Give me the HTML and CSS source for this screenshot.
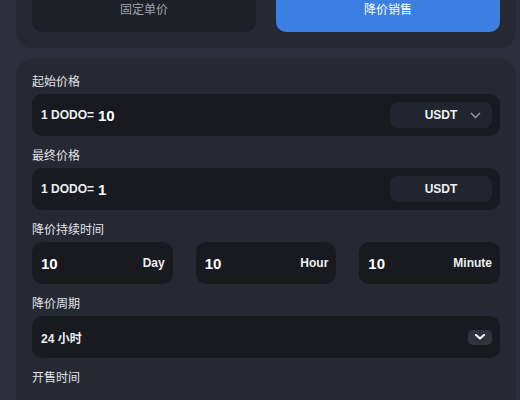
FILE: index.html
```html
<!DOCTYPE html>
<html lang="zh">
<head>
<meta charset="utf-8">
<title>降价销售</title>
<link rel="stylesheet" href="styles.css">
</head>
<body>
<div class="page">
  <section class="card tabs-card">
    <div class="tabs">
      <button class="tab">固定单价</button>
      <button class="tab active">降价销售</button>
    </div>
  </section>
  <section class="card form-card">
    <div class="field">
      <div class="label">起始价格</div>
      <div class="input">
        <span class="prefix">1 DODO=</span><span class="value">10</span>
        <span class="token">USDT
          <svg class="chev" width="11" height="7" viewBox="0 0 11 7"><path d="M1 1l4.5 4.5L10 1" fill="none" stroke="#9a9ca6" stroke-width="1.3"/></svg>
        </span>
      </div>
    </div>
    <div class="field">
      <div class="label">最终价格</div>
      <div class="input">
        <span class="prefix">1 DODO=</span><span class="value">1</span>
        <span class="token short">USDT</span>
      </div>
    </div>
    <div class="field">
      <div class="label">降价持续时间</div>
      <div class="time-row">
        <div class="input time"><span class="value">10</span><span class="unit">Day</span></div>
        <div class="input time"><span class="value">10</span><span class="unit">Hour</span></div>
        <div class="input time"><span class="value">10</span><span class="unit">Minute</span></div>
      </div>
    </div>
    <div class="field">
      <div class="label">降价周期</div>
      <div class="input">
        <span class="prefix">24 小时</span>
        <span class="sel-btn"><svg width="10" height="6" viewBox="0 0 10 6"><path d="M1 1l4 3.5L9 1" fill="none" stroke="#ffffff" stroke-width="2" stroke-linecap="round" stroke-linejoin="round"/></svg></span>
      </div>
    </div>
    <div class="field">
      <div class="label">开售时间</div>
    </div>
  </section>
</div>
</body>
</html>
```
FILE: styles.css
```css
* { box-sizing: border-box; }
html, body { margin: 0; height: 100%; overflow: hidden; }
body {
  background: #2c2f3a;
  font-family: "Liberation Sans", Arial, "Noto Sans CJK SC", sans-serif;
  color: #e6e7ec;
}
.page {
  height: 100vh;
  padding: 0 4px 0 16px;
  display: flex;
  flex-direction: column;
  gap: 11px;
}
.card {
  background: #262932;
  border-radius: 16px;
}
.tabs-card {
  margin-top: -16px;
  padding: 0 16px 16px;
}
.tabs {
  display: grid;
  grid-template-columns: 1fr 1fr;
  gap: 20px;
}
.tab {
  height: 48px;
  border: none;
  border-radius: 10px;
  background: #1e2027;
  color: #a0a2aa;
  font-family: "Noto Sans CJK SC", sans-serif;
  font-size: 12px;
  padding: 0;
}
.tab.active {
  background: #3a7fe1;
  color: #ffffff;
}
.form-card {
  flex: 1;
  border-radius: 16px 16px 0 0;
  padding: 12px 16px 0;
  display: flex;
  flex-direction: column;
  gap: 9px;
  overflow: hidden;
}
.field {
  display: flex;
  flex-direction: column;
  gap: 3px;
}
.label {
  font-family: "Noto Sans CJK SC", sans-serif;
  font-size: 12px;
  line-height: 20px;
  color: #e2e3e8;
}
.input {
  height: 42px;
  background: #181a20;
  border-radius: 10px;
  display: flex;
  align-items: center;
  padding: 0 8px 0 9px;
}
.prefix {
  font-family: "Liberation Sans", Arial, "Noto Sans CJK SC", sans-serif;
  font-size: 12px;
  font-weight: bold;
  color: #eceef2;
  margin-right: 4px;
}
.value {
  font-size: 15px;
  font-weight: bold;
  color: #ffffff;
}
.token {
  margin-left: auto;
  width: 102px;
  height: 26px;
  border-radius: 8px;
  background: #22252d;
  display: flex;
  align-items: center;
  justify-content: center;
  position: relative;
  font-size: 12px;
  font-weight: bold;
  color: #f0f1f4;
}
.token .chev {
  position: absolute;
  right: 11px;
  top: 10px;
}
.time-row {
  display: grid;
  grid-template-columns: 1fr 1fr 1fr;
  gap: 23px;
}
.time {
  justify-content: space-between;
  padding-right: 8px;
}
.unit {
  font-size: 12px;
  font-weight: bold;
  color: #eceef2;
}
.sel-btn {
  margin-left: auto;
  width: 24px;
  height: 15px;
  border-radius: 5px;
  background: #30333d;
  display: flex;
  align-items: center;
  justify-content: center;
}
```
